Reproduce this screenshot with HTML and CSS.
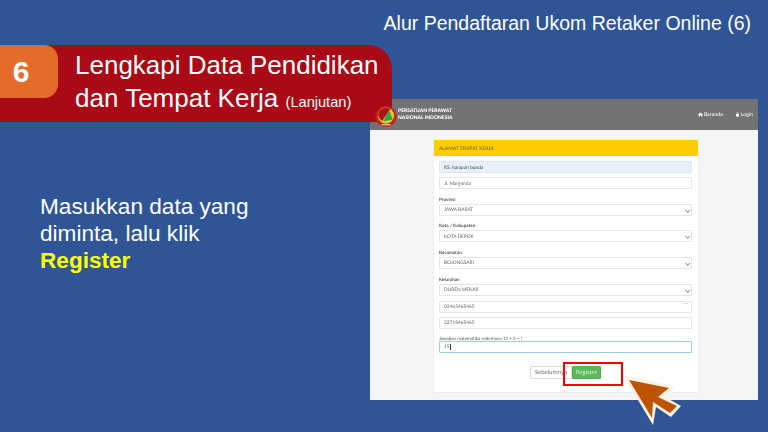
FILE: index.html
```html
<!DOCTYPE html>
<html lang="id">
<head>
<meta charset="utf-8">
<title>Alur Pendaftaran Ukom Retaker Online (6)</title>
<link rel="stylesheet" href="styles.css">
</head>
<body>
<main class="slide">
  <h1 class="slide-title">Alur Pendaftaran Ukom Retaker Online (6)</h1>

  <section class="banner">
    <div class="step">6</div>
    <h2 class="banner-text">Lengkapi Data Pendidikan<br>dan Tempat Kerja <small>(Lanjutan)</small></h2>
  </section>

  <p class="instruction">Masukkan data yang<br>diminta, lalu klik<br><strong>Register</strong></p>

  <section class="shot">
    <header class="nav">
      <div class="corner"></div>
      <svg class="logo" viewBox="0 0 24 24" aria-hidden="true">
        <circle cx="12" cy="12" r="11.5" fill="#c8201c"/>
        <circle cx="12" cy="11" r="8.8" fill="#e9c926"/>
        <path d="M3.4 11a8.6 8.6 0 0 1 13.2-7.2L8 16.5a8.6 8.6 0 0 1-4.6-5.5z" fill="#a8141c"/>
        <path d="M15.5 5l3.8 10.5-10.3 1.6z" fill="#2fa84a"/>
        <path d="M7 21h10" stroke="#f3dcdc" stroke-width="1.2"/>
      </svg>
      <div class="brand">PERSATUAN PERAWAT<br>NASIONAL INDONESIA</div>
      <nav class="nav-links">
        <a><svg class="nav-icon" viewBox="0 0 10 10"><path d="M5 1 0 5.5h1.5V9h2.5V6.5h2V9h2.5V5.5H10z" fill="#fff"/></svg>Beranda</a>
        <a><svg class="nav-icon" viewBox="0 0 10 10"><path d="M3 4V3a2 2 0 0 1 4 0v1h1v5H2V4zm1 0h2V3a1 1 0 0 0-2 0z" fill="#fff"/></svg>Login</a>
      </nav>
    </header>
    <div class="page">
      <article class="card">
        <div class="card-head">ALAMAT TEMPAT KERJA</div>
        <form class="form">
          <div class="input filled">RS. harapan bunda</div>
          <div class="input">Jl. Margonda</div>
          <div class="label">Provinsi</div>
          <div class="input select">JAWA BARAT</div>
          <div class="label">Kota / Kabupaten</div>
          <div class="input select">KOTA DEPOK</div>
          <div class="label">Kecamatan</div>
          <div class="input select">BOJONGSARI</div>
          <div class="label">Kelurahan</div>
          <div class="input select last">DUREN MEKAR</div>
          <div class="input marked">03465465465</div>
          <div class="input">32718465465</div>
          <div class="label math">Jawaban matematika sederhana 12 + 3 = ?</div>
          <div class="input focus">15<span class="caret"></span></div>
          <div class="actions">
            <span class="btn">Sebelumnya</span>
            <span class="btn green">Register</span>
          </div>
        </form>
      </article>
    </div>
  </section>

  <div class="highlight"></div>
  <svg class="pointer" viewBox="620 370 66 60" aria-hidden="true">
    <polygon points="623,375 675,386 665,397 681,406 671,417 656,407 653,425" fill="#fbf3e4"/>
    <polygon points="629,380 669,388 658,397 677,406 670,413 653,402 652,418" fill="#bd5405"/>
  </svg>
</main>
</body>
</html>
```
FILE: styles.css
```css
* { box-sizing: border-box; }

html, body {
  margin: 0;
  padding: 0;
}

.slide {
  position: relative;
  width: 768px;
  height: 432px;
  overflow: hidden;
  background: #2f5597;
  font-family: "Liberation Sans", Arial, sans-serif;
  color: #fff;
}

.slide-title {
  position: absolute;
  top: 12px;
  right: 17px;
  margin: 0;
  font-size: 19.5px;
  line-height: 22px;
  font-weight: 400;
  white-space: nowrap;
}

.banner {
  position: absolute;
  left: 0;
  top: 45px;
  width: 392px;
  height: 77px;
  display: flex;
  align-items: flex-start;
  gap: 17px;
  background: #a90a16;
  border-top-right-radius: 24px;
}

.step {
  width: 58px;
  height: 53px;
  padding-right: 16px;
  display: flex;
  align-items: center;
  justify-content: center;
  background: #e46c2a;
  border-radius: 0 14px 14px 0;
  font-size: 30px;
  font-weight: 700;
}

.banner-text {
  margin: 4px 0 0;
  font-size: 26px;
  line-height: 33px;
  font-weight: 400;
  white-space: nowrap;
}

.banner-text small {
  font-size: 14.6px;
}

.instruction {
  position: absolute;
  left: 40px;
  top: 193px;
  margin: 0;
  font-size: 22.6px;
  line-height: 27px;
}

.instruction strong {
  color: #ffff00;
}

.shot {
  position: absolute;
  left: 370px;
  top: 99px;
  width: 388px;
  height: 301px;
  display: flex;
  flex-direction: column;
  background: #f5f5f5;
  filter: blur(0.6px);
  font-family: Lato, "Open Sans", sans-serif;
  text-rendering: geometricPrecision;
}

.nav {
  position: relative;
  flex: none;
  height: 31px;
  display: flex;
  align-items: center;
  padding: 0 5px 0 5px;
  background: #737373;
  color: #fff;
}

.corner {
  position: absolute;
  left: 0;
  top: 0;
  width: 22px;
  height: 23px;
  background: #a90a16;
}

.logo {
  position: relative;
  width: 22px;
  height: 23px;
  flex: none;
  margin-top: 4px;
}

.brand {
  margin-left: 1px;
  font-size: 5px;
  line-height: 6.5px;
  font-weight: 900;
  white-space: nowrap;
}

.nav-links {
  margin-left: auto;
  display: flex;
  gap: 12px;
  font-size: 5.2px;
}

.nav-links a {
  display: flex;
  align-items: center;
  gap: 1px;
}

.nav-icon {
  width: 5px;
  height: 5px;
}

.page {
  flex: 1;
  padding: 10px 60px 8px 64px;
}

.card {
  height: 252px;
  background: #fff;
  box-shadow: 0 0 1px rgba(0, 0, 0, 0.2);
}

.card-head {
  height: 16px;
  padding: 1px 0 0 5px;
  display: flex;
  align-items: center;
  background: #ffcc00;
  color: #8a7a30;
  font-size: 4.8px;
  font-weight: 700;
}

.form {
  padding: 5px 6px 0 5px;
  display: flex;
  flex-direction: column;
}

.input {
  height: 12px;
  margin-bottom: 4px;
  padding: 1px 0 0 4px;
  display: flex;
  align-items: center;
  background: #fff;
  border: 1px solid #e6e6e6;
  border-radius: 1px;
  color: #666;
  font-size: 4.8px;
}

.filled {
  background: #e8f0fb;
  border-color: #dfe7f3;
  color: #444;
}

.select {
  position: relative;
}

.select::after {
  content: "";
  position: absolute;
  right: 2px;
  top: 3px;
  width: 2.5px;
  height: 2.5px;
  border-right: 0.6px solid #999;
  border-bottom: 0.6px solid #999;
  transform: rotate(45deg);
}

.last {
  margin-bottom: 5px;
}

.marked {
  position: relative;
}

.marked::after {
  content: "";
  position: absolute;
  right: 3px;
  top: 1px;
  width: 5px;
  height: 1px;
  background: #ddd;
}

.focus {
  border-color: #9ecbe0;
  margin-bottom: 0;
}

.caret {
  width: 0.6px;
  height: 6px;
  margin-left: 0.5px;
  background: #333;
}

.label {
  height: 10.67px;
  display: flex;
  align-items: flex-end;
  padding-bottom: 2px;
  color: #555;
  font-size: 4.6px;
  font-weight: 700;
}

.label.math {
  height: 9px;
  font-size: 4.5px;
  font-weight: 400;
  padding-bottom: 0;
  margin-top: -1px;
}

.actions {
  margin-top: 13px;
  display: flex;
  justify-content: center;
}

.btn {
  width: 42px;
  height: 13px;
  display: flex;
  align-items: center;
  justify-content: center;
  background: #fff;
  border: 1px solid #dcdcdc;
  border-radius: 1px;
  color: #555;
  font-family: "Open Sans", sans-serif;
  font-size: 5.6px;
}

.btn.green {
  width: 29px;
  background: #5cb85c;
  border-color: #52ac52;
  color: #e8f5e8;
}

.highlight {
  position: absolute;
  left: 563px;
  top: 362px;
  width: 60px;
  height: 24px;
  border: 2px solid #ff0000;
}

.pointer {
  position: absolute;
  left: 620px;
  top: 370px;
  width: 66px;
  height: 60px;
}
```
